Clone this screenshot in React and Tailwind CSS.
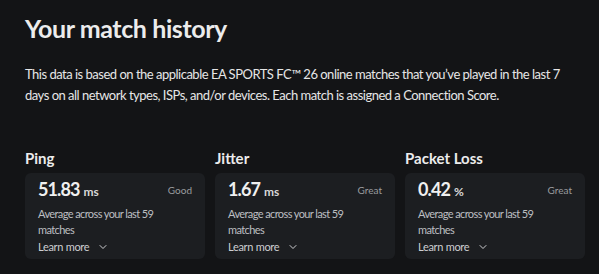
import React from "react";
import { ChevronDown } from "lucide-react";

const METRICS = [
  { label: "Ping", value: "51.83", unit: "ms", rating: "Good" },
  { label: "Jitter", value: "1.67", unit: "ms", rating: "Great" },
  { label: "Packet Loss", value: "0.42", unit: "%", rating: "Great" },
];

function MetricCard({ m }) {
  return (
    <div>
      <h3 className="text-[15px] font-bold text-[#ececec] leading-5 mb-[5px]">{m.label}</h3>
      <div className="rounded-md bg-[#1c1e21] px-[13px] pt-[4px] h-[86px]">
        <div className="flex items-start justify-between">
          <div className="flex items-baseline gap-[4px]">
            <span className="text-[18px] font-bold text-[#f0f0f0] leading-6 tracking-[-0.9px]">{m.value}</span>
            <span className="text-[12px] font-bold text-[#d8d8d8]">{m.unit}</span>
          </div>
          <span className="text-[10px] text-[#9a9c9f] mt-[6px]">{m.rating}</span>
        </div>
        <p className="text-[11px] leading-4 text-[#bcbec1] mt-[5px] w-[135px] tracking-[-0.6px]">
          Average across your last 59 matches
        </p>
        <button className="flex items-center gap-[8px] text-[11px] leading-4 text-[#cdced1] mt-[1px] tracking-[-0.3px]">
          Learn more <ChevronDown size={12} strokeWidth={2} />
        </button>
      </div>
    </div>
  );
}

export default function App() {
  return (
    <div
      className="w-[599px] h-[274px] bg-[#131416] px-[25px] pt-[12px] overflow-hidden"
      style={{ fontFamily: "Lato, 'Noto Sans', sans-serif" }}
    >
      <h1 className="text-[25px] font-bold text-[#ececec] leading-8 tracking-[-0.4px]">Your match history</h1>
      <p className="text-[13px] leading-[21px] text-[#e6e6e6] mt-[20px] tracking-[-0.5px] whitespace-nowrap">
        This data is based on the applicable EA SPORTS FC™ 26 online matches that you’ve played in the last 7
        <br />
        days on all network types, ISPs, and/or devices. Each match is assigned a Connection Score.
      </p>
      <div className="grid grid-cols-[180px_180px_180px] gap-[10px] mt-[42px]">
        {METRICS.map((m) => (
          <MetricCard key={m.label} m={m} />
        ))}
      </div>
    </div>
  );
}
